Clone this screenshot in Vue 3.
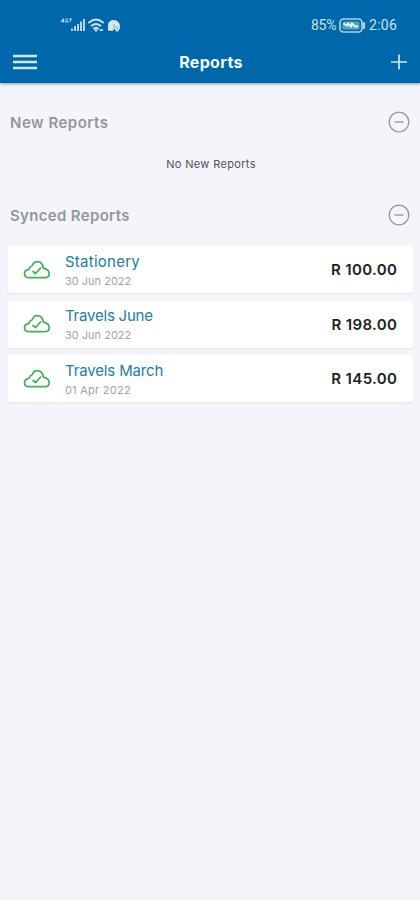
<script setup>
const reports = [
  { name: 'Stationery', date: '30 Jun 2022', amount: 'R 100.00', cls: 'first' },
  { name: 'Travels June', date: '30 Jun 2022', amount: 'R 198.00', cls: 'second' },
  { name: 'Travels March', date: '01 Apr 2022', amount: 'R 145.00', cls: 'third' },
]
</script>

<template>
  <main class="screen">
    <header class="header">
      <div class="status">
        <svg class="signals" width="62" height="18" viewBox="0 0 62 18" fill="none">
          <g stroke="#b5d6e7" stroke-width="1.1">
            <path d="M3.500 2.500v4M3.500 2.500L1.500 5.500h3M8 3H6v3h2V4.500M9 3h3M10.500 3v2.500" />
          </g>
          <path d="M11 12.500h2V15h-2zM14 10h2v5h-2zM17 8h2v7h-2zM20 5.500h2V15h-2zM23 3h2v12h-2z" fill="#b5d6e7" />
          <g stroke="#c9e3ef" stroke-width="1.9" stroke-linecap="round">
            <path d="M29 6.500q7-6 14 0M31.500 9.700q4.500-3.500 9 0M34 12.500q2-1.500 4 0" />
          </g>
          <circle cx="36" cy="14.300" r="1.400" fill="#c9e3ef" />
          <path d="M39.500 14h3.500" stroke="#b0d4e5" stroke-width="2" />
          <path d="M48 14.500V10c0-3.500 2-6 5.500-6 4 0 6.500 3 6.500 6.500 0 2-.7 3.500-2 5H56l-1.500-3-2 2.500z" fill="#d3e8ee" />
          <path d="M54 8v4M56.500 10l1 4" stroke="#78abc6" stroke-width="1" />
        </svg>
        <div class="power">
          <span class="percent">85%</span>
          <svg width="27" height="15" viewBox="0 0 27 15" fill="none">
            <rect x="1" y="1" width="22" height="13" rx="3.500" stroke="#a9d1df" stroke-width="1.700" />
            <rect x="3.500" y="3.500" width="17" height="8" rx="1.500" fill="#5aa4c2" />
            <path d="M4.500 5.500l3.500 2 1-2 3 3 1-3 3 3h3" stroke="#e5fbfd" stroke-width="1.800" />
            <path d="M25 5v5" stroke="#a9d1df" stroke-width="2.200" stroke-linecap="round" />
          </svg>
          <span class="clock">2:06</span>
        </div>
      </div>
      <div class="bar">
        <svg width="24" height="16" viewBox="0 0 24 16" stroke="#d0e8f3" stroke-width="2.400">
          <path d="M0 2h24M0 8h24M0 14h24" />
        </svg>
        <h1>Reports</h1>
        <svg width="16" height="16" viewBox="0 0 16 16" stroke="#d0e8f3" stroke-width="1.700">
          <path d="M0 8h16M8 .5v15" />
        </svg>
      </div>
    </header>

    <section class="new">
      <div class="heading">
        <h2 class="new-title">New Reports</h2>
        <svg width="22" height="22" viewBox="0 0 22 22" fill="none" stroke="#92979c">
          <circle cx="11" cy="11" r="9.800" stroke-width="1.300" />
          <path d="M6.500 11h9" stroke-width="1.300" />
        </svg>
      </div>
      <p class="empty">No New Reports</p>
    </section>

    <section class="synced">
      <div class="heading">
        <h2 class="synced-title">Synced Reports</h2>
        <svg width="22" height="22" viewBox="0 0 22 22" fill="none" stroke="#92979c">
          <circle cx="11" cy="11" r="9.800" stroke-width="1.300" />
          <path d="M6.500 11h9" stroke-width="1.300" />
        </svg>
      </div>
      <div class="list">
        <article v-for="report in reports" :key="report.name" class="card" :class="report.cls">
          <svg class="cloud" width="28" height="20" viewBox="0 0 28 20" fill="none" stroke="#46ad59" stroke-width="1.700" stroke-linecap="round" stroke-linejoin="round">
            <path d="M5.800 17.700C3 17.700 1.500 16 1.500 13.800c0-2.300 1.700-4 4.400-4.500.5-1.800 1.500-3 3.300-3.500C10.100 3 11.800 1.600 14 1.600c3.400 0 5.900 2.600 6.300 6.500 3.500.8 5.900 2.600 5.900 5.300 0 2.500-1.700 4.300-4.300 4.300z" />
            <path d="M10 11.500l2.500 2.200L17.500 8" />
          </svg>
          <div class="details">
            <h3>{{ report.name }}</h3>
            <time>{{ report.date }}</time>
          </div>
          <span class="amount">{{ report.amount }}</span>
        </article>
      </div>
    </section>
  </main>
</template>

<style>
body { background: #f4f4fa; }
</style>

<style scoped>
* { box-sizing: border-box; }
h1, h2, h3, p { margin: 0; }
svg { display: block; flex-shrink: 0; }
.screen { height: 900px; background: #f4f4fa; font-family: Inter, sans-serif; white-space: nowrap; }
.header { height: 83px; background: #0067aa; box-shadow: 0 1px 3px #879ba9; padding-top: 10px; }
.status { height: 30px; display: flex; justify-content: space-between; align-items: center; padding: 0 22px 0 60px; color: #c9e2ed; }
.power { display: flex; align-items: center; font-family: Roboto, sans-serif; font-size: 14px; line-height: 20px; }
.percent { width: 28px; letter-spacing: -.3px; }
.clock { margin-left: 3px; width: 29px; letter-spacing: .3px; }
.bar { height: 43px; display: grid; grid-template-columns: 24px 1fr 16px; align-items: center; padding: 1px 13px; }
h1 { color: #f3fbff; font-size: 16px; line-height: 24px; font-weight: 700; text-align: center; padding: 1px 6px 0 0; letter-spacing: .35px; }
.new { height: 93px; padding-top: 28px; }
.heading { display: flex; align-items: center; justify-content: space-between; height: 22px; padding: 0 10px; }
h2 { font-size: 15px; font-weight: 600; line-height: 22px; color: #92979c; padding-top: 1px; }
.new-title { letter-spacing: .5px; }
.synced-title { letter-spacing: .33px; padding-top: 2px; }
.empty { font-size: 11px; line-height: 16px; padding: 23px 0 0 2px; text-align: center; color: #505157; letter-spacing: .35px; }
.synced { padding-top: 28px; }
.list { display: flex; flex-direction: column; gap: 7.700px; padding: 20px 7px 0 8px; }
.card { height: 47px; border-radius: 2px; background: #fff; box-shadow: 0 1px 2px #e3e3e8; display: flex; align-items: center; padding: 0 15.600px 0 15px; }
.details { display: flex; flex-direction: column; margin-left: 14px; flex: 1; padding-top: 2px; }
h3 { font-size: 15px; line-height: 20px; font-weight: 400; color: #247ba0; }
.first h3 { letter-spacing: .25px; }
.second h3 { letter-spacing: -.22px; }
.third h3 { letter-spacing: -.15px; }
time { font-size: 11px; line-height: 18px; color: #a2a2a6; }
.third time { letter-spacing: .25px; }
.amount { color: #202124; font-size: 15px; font-weight: 600; line-height: 20px; padding-top: 1px; letter-spacing: .38px; }
</style>
